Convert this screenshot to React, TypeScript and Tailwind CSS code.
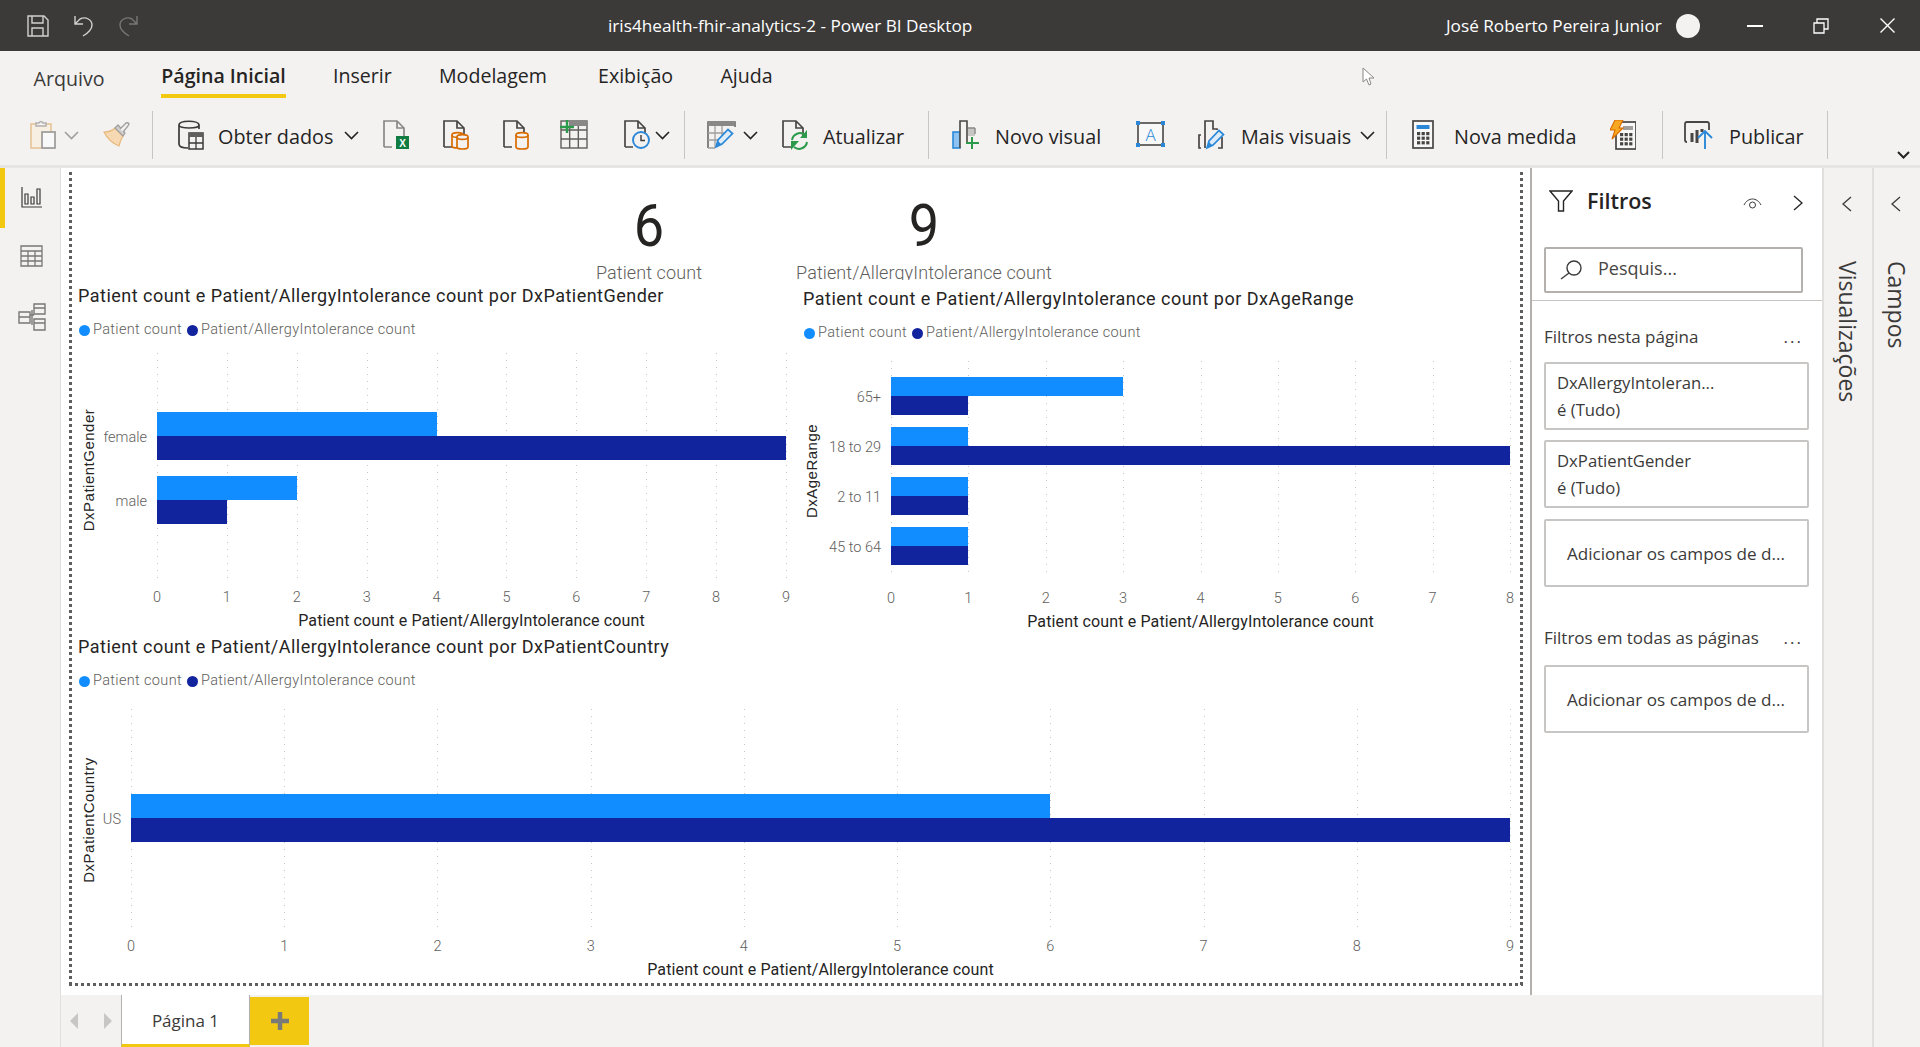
import type { ReactNode } from "react";

const UI = "font-['Open_Sans','Noto_Sans',sans-serif]";
const CHART = "font-['Roboto',sans-serif]";

type Category = { label: string; a: number; b: number };

function Chev({ className = "", color = "#252423" }: { className?: string; color?: string }) {
  return (
    <svg viewBox="0 0 15 9" className={`h-[9px] w-[15px] shrink-0 ${className}`} fill="none" stroke={color} strokeWidth="1.6">
      <path d="M1 1 L7.5 7.5 L14 1" />
    </svg>
  );
}

function Sep({ className = "" }: { className?: string }) {
  return <div className={`h-[48px] w-px shrink-0 bg-[#c8c6c4] ${className}`} />;
}

function Doc({ stroke = "#484644" }: { stroke?: string }) {
  return <path d="M1 27 V1 H14 L21 8 V16 M14 1 V8 H21 M1 27 H9" fill="#f3f2f1" stroke={stroke} strokeWidth="1.7" />;
}

function Cylinder({ x, y, w, h, color }: { x: number; y: number; w: number; h: number; color: string }) {
  return (
    <g fill="#f3f2f1" stroke={color} strokeWidth="1.7">
      <path d={`M${x} ${y + 2} V${y + h - 2} Q${x} ${y + h} ${x + w / 2} ${y + h} Q${x + w} ${y + h} ${x + w} ${y + h - 2} V${y + 2}`} />
      <ellipse cx={x + w / 2} cy={y + 2} rx={w / 2} ry="2.4" />
    </g>
  );
}

function Pencil({ x, y }: { x: number; y: number }) {
  return (
    <g transform={`translate(${x} ${y})`}>
      <path d="M1 19 L3 12 L13 1.5 L17.5 5.5 L7 16 Z" fill="#deecf9" stroke="#2b88d8" strokeWidth="1.7" />
      <path d="M1 19 L3 13 L6.5 16.5 Z" fill="#2b88d8" />
    </g>
  );
}

function TableGrid({ x, y, w, h, stroke = "#605e5c" }: { x: number; y: number; w: number; h: number; stroke?: string }) {
  return (
    <g fill="none" stroke={stroke} strokeWidth="1.4">
      <rect x={x} y={y} width={w} height={h} />
      <path d={`M${x} ${y + h / 3} H${x + w} M${x} ${y + (2 * h) / 3} H${x + w} M${x + w / 3} ${y} V${y + h} M${x + (2 * w) / 3} ${y} V${y + h}`} />
    </g>
  );
}

function PasteIcon() {
  return (
    <svg viewBox="0 0 27 30" className="h-[30px] w-[27px] shrink-0">
      <rect x="1" y="4" width="20" height="24" fill="#f8efe3" stroke="#e8c9a0" strokeWidth="1.8" />
      <path d="M6 6 V3 H9 Q11 0 13 3 H16 V6 Z" fill="#f3f2f1" stroke="#b3b0ad" strokeWidth="1.5" />
      <rect x="12" y="12" width="13" height="16" fill="#f8f8f8" stroke="#a19f9d" strokeWidth="1.8" />
    </svg>
  );
}

function BrushIcon() {
  return (
    <svg viewBox="0 0 27 26" className="h-[26px] w-[27px] shrink-0">
      <path d="M1 10 Q8 10 12 6 L20 14 Q17 19 16 24 Q6 20 1 10 Z" fill="#f6d9b3" stroke="#e8b77a" strokeWidth="1.2" />
      <path d="M12 6 L15 3 L22 11 L20 14 Z" fill="#d2d0ce" stroke="#a19f9d" strokeWidth="1.2" />
      <path d="M17 7 L23 1 Q25 0 26 2 Q26 3 20 10" fill="#f3f2f1" stroke="#a19f9d" strokeWidth="1.4" />
    </svg>
  );
}

function ObterIcon() {
  return (
    <svg viewBox="0 0 26 30" className="h-[30px] w-[26px] shrink-0">
      <path d="M1 5 V24 Q1 28 10 28 M21 5 V9 M1 5 C1 0 21 0 21 5 C21 9 1 9 1 5" fill="none" stroke="#3b3a39" strokeWidth="1.7" />
      <rect x="11" y="13" width="14" height="16" fill="#f3f2f1" stroke="#3b3a39" strokeWidth="1.5" />
      <rect x="11" y="13" width="14" height="4" fill="#605e5c" />
      <path d="M11 23 H25 M18 17 V29" stroke="#3b3a39" strokeWidth="1.3" />
    </svg>
  );
}

function ExcelDocIcon() {
  return (
    <svg viewBox="0 0 26 30" className="h-[30px] w-[26px] shrink-0">
      <Doc stroke="#8a8886" />
      <rect x="13" y="16" width="13" height="13" fill="#107c41" />
      <text x="19.5" y="26.5" fontSize="10" fontWeight="700" fill="#fff" textAnchor="middle" fontFamily="Liberation Sans">X</text>
    </svg>
  );
}

function DocDoubleDbIcon() {
  return (
    <svg viewBox="0 0 26 30" className="h-[30px] w-[26px] shrink-0">
      <Doc />
      <Cylinder x={9} y={13} w={11} h={15} color="#d86c00" />
      <Cylinder x={14} y={15} w={11} h={14} color="#d86c00" />
    </svg>
  );
}

function DocDbIcon() {
  return (
    <svg viewBox="0 0 26 30" className="h-[30px] w-[26px] shrink-0">
      <Doc />
      <Cylinder x={13} y={13} w={12} h={16} color="#d86c00" />
    </svg>
  );
}

function TablePlusIcon() {
  return (
    <svg viewBox="0 0 29 30" className="h-[30px] w-[29px] shrink-0">
      <TableGrid x={2} y={1} w={26} h={27} />
      <rect x="10" y="1" width="18" height="5" fill="#8a8886" />
      <path d="M8 0 V13 M1 7 H15" stroke="#2c9a4b" strokeWidth="2.4" />
    </svg>
  );
}

function ClockDocIcon() {
  return (
    <svg viewBox="0 0 26 30" className="h-[30px] w-[26px] shrink-0">
      <Doc />
      <circle cx="17" cy="20" r="8" fill="#f3f2f1" stroke="#2b88d8" strokeWidth="1.9" />
      <path d="M17 15 V20.5 H21" fill="none" stroke="#3b3a39" strokeWidth="1.4" />
    </svg>
  );
}

function TableEditIcon() {
  return (
    <svg viewBox="0 0 29 30" className="h-[30px] w-[29px] shrink-0">
      <path d="M1 28 V2 H28 V7" fill="none" stroke="#605e5c" strokeWidth="1.5" />
      <rect x="1" y="1" width="27" height="5" fill="#8a8886" />
      <path d="M1 13 H20 M1 20 H13 M8 6 V27 M15 6 V20 M1 28 H8" stroke="#a19f9d" strokeWidth="1.3" fill="none" />
      <Pencil x={8} y={8} />
    </svg>
  );
}

function RefreshDocIcon() {
  return (
    <svg viewBox="0 0 26 30" className="h-[30px] w-[26px] shrink-0">
      <Doc />
      <path d="M10 20 A8 8 0 0 1 23 15 M25 22 A8 8 0 0 1 12 27" fill="none" stroke="#2c9a4b" strokeWidth="2" />
      <path d="M25 10 V18 H18 Z M9 30 V21 H17 Z" fill="#2c9a4b" />
    </svg>
  );
}

function NovoVisualIcon() {
  return (
    <svg viewBox="0 0 27 30" className="h-[30px] w-[27px] shrink-0">
      <rect x="1" y="12" width="7" height="16" fill="#8cc3f3" stroke="#2b88d8" strokeWidth="1.6" />
      <path d="M8 28 V1 H15 V22" fill="#f3f2f1" stroke="#484644" strokeWidth="1.6" />
      <rect x="16" y="8" width="7" height="8" fill="#c8c6c4" />
      <path d="M23 8 V14 M16 8 H23" stroke="#8a8886" strokeWidth="1.4" />
      <path d="M20 17 V29 M14 23 H27" stroke="#2c9a4b" strokeWidth="2" />
    </svg>
  );
}

function TextBoxIcon() {
  return (
    <svg viewBox="0 0 29 30" className="h-[30px] w-[29px] shrink-0">
      <rect x="2" y="3" width="25" height="22" fill="#f8f8f8" stroke="#484644" strokeWidth="1.6" />
      <g fill="#2b88d8">
        <rect x="0" y="1" width="4" height="4" />
        <rect x="25" y="1" width="4" height="4" />
        <rect x="0" y="23" width="4" height="4" />
        <rect x="25" y="23" width="4" height="4" />
      </g>
      <text x="14.5" y="20.5" fontSize="17" fontWeight="300" fill="#2b88d8" textAnchor="middle" fontFamily="Open Sans">A</text>
    </svg>
  );
}

function MaisVisuaisIcon() {
  return (
    <svg viewBox="0 0 27 30" className="h-[30px] w-[27px] shrink-0">
      <path d="M3 15 H1 V28 H3 M7 28 V1 H15 V9 H19 V10 M24 17 V28 H20" fill="none" stroke="#484644" strokeWidth="1.7" />
      <Pencil x={8} y={9} />
    </svg>
  );
}

function CalcBody() {
  return (
    <g>
      <rect x="1" y="1" width="20" height="27" fill="#f8f8f8" stroke="#484644" strokeWidth="1.7" />
      <g fill="#484644">
        {[0, 1, 2].map((r) =>
          [0, 1, 2].map((c) => <rect key={`${r}${c}`} x={5 + c * 4.6} y={12 + r * 4.6} width="3.2" height="3.2" />),
        )}
      </g>
    </g>
  );
}

function CalcIcon() {
  return (
    <svg viewBox="0 0 22 30" className="h-[30px] w-[22px] shrink-0">
      <CalcBody />
      <rect x="4.5" y="5" width="13" height="4" fill="#2b88d8" />
    </svg>
  );
}

function QuickMeasureIcon() {
  return (
    <svg viewBox="0 0 26 30" className="h-[30px] w-[26px] shrink-0">
      <g transform="translate(5 1)">
        <CalcBody />
        <rect x="8" y="5" width="10" height="4" fill="#a19f9d" />
      </g>
      <path d="M5 0 H13 L9 8 H13 L2 19 L5 10 H0 Z" fill="#f7a823" stroke="#d86c00" strokeWidth="1.1" />
    </svg>
  );
}

function PublishIcon() {
  return (
    <svg viewBox="0 0 29 30" className="h-[30px] w-[29px] shrink-0">
      <path d="M3 22 Q1 22 1 20 V4 Q1 2 3 2 H23 Q25 2 25 4 V10" fill="none" stroke="#484644" strokeWidth="1.8" />
      <path d="M8 13 V22 M13 10 V23 M18 9 V12" stroke="#484644" strokeWidth="3" />
      <path d="M21 29 V11 M14 18 L21 11 L28 18" fill="none" stroke="#2b88d8" strokeWidth="1.9" />
    </svg>
  );
}

function RibbonText({ className, children }: { className: string; children: ReactNode }) {
  return <span className={`mt-[3px] shrink-0 whitespace-nowrap text-[19.8px] leading-none text-[#252423] ${className}`}>{children}</span>;
}

function TitleBar() {
  return (
    <div className={`flex h-[51px] shrink-0 items-center bg-[#3b3a39] text-[17.2px] text-white ${UI}`}>
      <svg viewBox="0 0 22 22" className="ml-[27px] h-[22px] w-[22px] shrink-0" fill="none" stroke="#d2d0ce" strokeWidth="1.4">
        <path d="M1 1 H17 L21 5 V21 H1 Z M5 1 V8 H16 V1 M5 21 V13 H16 V21" />
      </svg>
      <svg viewBox="0 0 19 22" className="ml-[25px] h-[22px] w-[19px] shrink-0" fill="none" stroke="#d2d0ce" strokeWidth="1.4">
        <path d="M1 1 V9 H9 M1 9 L6 4 C12 1 18 5 18 10 C18 14 14 18 9 21" />
      </svg>
      <svg viewBox="0 0 20 22" className="ml-[25px] h-[22px] w-[20px] shrink-0" fill="none" stroke="#797775" strokeWidth="1.4">
        <path d="M19 1 V9 H11 M19 9 L14 4 C8 1 2 5 2 10 C2 14 6 18 11 21" />
      </svg>
      <span className="ml-[470px] w-[364px] shrink-0 whitespace-nowrap text-center">iris4health-fhir-analytics-2 - Power BI Desktop</span>
      <span className="ml-[474px] w-[215px] shrink-0 whitespace-nowrap text-center">José Roberto Pereira Junior</span>
      <div className="ml-[15px] h-[24px] w-[24px] shrink-0 rounded-full bg-[#f3f2f1]" />
      <div className="ml-[47px] h-[2px] w-[16px] shrink-0 bg-white" />
      <svg viewBox="0 0 16 16" className="ml-[50px] h-[16px] w-[16px] shrink-0" fill="none" stroke="#fff" strokeWidth="1.3">
        <path d="M1 5 H11 V15 H1 Z M4 5 V1 H15 V11 H11" />
      </svg>
      <svg viewBox="0 0 15 15" className="ml-[51px] h-[15px] w-[15px] shrink-0" fill="none" stroke="#fff" strokeWidth="1.4">
        <path d="M0.5 0.5 L14.5 14.5 M14.5 0.5 L0.5 14.5" />
      </svg>
    </div>
  );
}

function MenuTabs() {
  return (
    <div className={`relative flex h-[54px] shrink-0 items-start pt-[12px] text-[19.6px] leading-[26px] text-[#252423] ${UI}`}>
      <span className="ml-[33px] mt-[3px] w-[72px] shrink-0 text-center text-[#3b3a39]">Arquivo</span>
      <span className="ml-[56px] w-[125px] shrink-0 whitespace-nowrap border-b-4 border-[#f2c811] pb-[5px] text-center font-semibold">Página Inicial</span>
      <span className="ml-[47px] w-[56px] shrink-0 text-center">Inserir</span>
      <span className="ml-[49px] w-[110px] shrink-0 text-center">Modelagem</span>
      <span className="ml-[50px] w-[74px] shrink-0 text-center">Exibição</span>
      <span className="ml-[48px] w-[53px] shrink-0 text-center">Ajuda</span>
      <svg viewBox="0 0 13 19" className="absolute left-[1362px] top-[16px] h-[19px] w-[13px]" fill="#fff" stroke="#8a8886" strokeWidth="1">
        <path d="M1 1 V15 L4.5 12 L7 18 L9 17 L7 11 H12 Z" />
      </svg>
    </div>
  );
}

function RibbonRow() {
  return (
    <div className={`flex h-[60px] shrink-0 items-center ${UI}`}>
      <div className="ml-[30px] shrink-0"><PasteIcon /></div>
      <Chev className="ml-[7px]" color="#a19f9d" />
      <div className="ml-[24px] shrink-0"><BrushIcon /></div>
      <Sep className="ml-[22px]" />
      <div className="ml-[25px] shrink-0"><ObterIcon /></div>
      <RibbonText className="ml-[14px] w-[116px]">Obter dados</RibbonText>
      <Chev className="ml-[10px]" />
      <div className="ml-[24px] shrink-0"><ExcelDocIcon /></div>
      <div className="ml-[34px] shrink-0"><DocDoubleDbIcon /></div>
      <div className="ml-[34px] shrink-0"><DocDbIcon /></div>
      <div className="ml-[30px] shrink-0"><TablePlusIcon /></div>
      <div className="ml-[36px] shrink-0"><ClockDocIcon /></div>
      <Chev className="ml-[5px]" />
      <Sep className="ml-[14px]" />
      <div className="ml-[22px] shrink-0"><TableEditIcon /></div>
      <Chev className="ml-[7px]" />
      <div className="ml-[24px] shrink-0"><RefreshDocIcon /></div>
      <RibbonText className="ml-[15px] w-[80px]">Atualizar</RibbonText>
      <Sep className="ml-[25px]" />
      <div className="ml-[23px] shrink-0"><NovoVisualIcon /></div>
      <RibbonText className="ml-[16px] w-[107px]">Novo visual</RibbonText>
      <div className="ml-[34px] shrink-0"><TextBoxIcon /></div>
      <div className="ml-[33px] shrink-0"><MaisVisuaisIcon /></div>
      <RibbonText className="ml-[16px] w-[109px]">Mais visuais</RibbonText>
      <Chev className="ml-[10px]" />
      <Sep className="ml-[11px]" />
      <div className="ml-[25px] shrink-0"><CalcIcon /></div>
      <RibbonText className="ml-[20px] w-[122px]">Nova medida</RibbonText>
      <div className="ml-[34px] shrink-0"><QuickMeasureIcon /></div>
      <Sep className="ml-[26px]" />
      <div className="ml-[21px] shrink-0"><PublishIcon /></div>
      <RibbonText className="ml-[16px] w-[73px]">Publicar</RibbonText>
      <Sep className="ml-[25px]" />
      <svg viewBox="0 0 13 8" className="ml-[69px] mt-[40px] h-[8px] w-[13px] shrink-0" fill="none" stroke="#252423" strokeWidth="2">
        <path d="M1 1 L6.5 6.5 L12 1" />
      </svg>
    </div>
  );
}

function LeftRail() {
  return (
    <div className="flex w-[61px] shrink-0 flex-col border-r border-[#e1dfdd] bg-[#f3f2f1]">
      <div className="flex h-[60px] items-center border-l-[5px] border-[#f2c811] pb-[2px] pl-[16px]">
        <svg viewBox="0 0 21 21" className="h-[21px] w-[21px]" fill="none" stroke="#3b3a39" strokeWidth="1.2">
          <path d="M1 0 V20 H21 M4 17 V7 H7 V17 Z M10 17 V10 H13 V17 Z M16 17 V2 H19 V17 Z" />
        </svg>
      </div>
      <svg viewBox="0 0 23 22" className="ml-[20px] mt-[17px] h-[22px] w-[23px]" fill="none" stroke="#797775" strokeWidth="1.3">
        <path d="M1 1 H22 V21 H1 Z M1 6 H22 M1 11 H22 M1 16 H22 M8 6 V21 M15 6 V21" />
      </svg>
      <svg viewBox="0 0 28 28" className="ml-[18px] mt-[36px] h-[28px] w-[28px]" fill="none" stroke="#797775" strokeWidth="1.4">
        <path d="M1 9 H12 V20 H1 Z M1 14 H12 M16 1 H27 V11 H16 Z M16 5 H27 M16 16 H27 V27 H16 Z M16 20 H27 M12 12 H16 M14 7 V22" />
      </svg>
    </div>
  );
}

function Kpi({ value, label, className }: { value: string; label: string; className: string }) {
  return (
    <div className={`flex shrink-0 flex-col items-center pt-[28px] ${CHART} ${className}`}>
      <div className="mb-[8px] scale-x-90 text-[60px] font-[450] leading-[60px] text-[#252423]">{value}</div>
      <div className="h-[16px] overflow-hidden whitespace-nowrap text-[18px] font-light leading-[18px] tracking-[0.1px] text-[#605e5c]">{label}</div>
    </div>
  );
}

function Legend() {
  return (
    <div className="flex h-[40px] items-center text-[14.5px] font-light tracking-[0.35px] text-[#605e5c]">
      <span className="ml-px mr-[3px] h-[11px] w-[11px] rounded-full bg-[#118dff]" />
      <span className="w-[94px] whitespace-nowrap">Patient count</span>
      <span className="mr-[3px] h-[11px] w-[11px] rounded-full bg-[#12239e]" />
      <span className="whitespace-nowrap">Patient/AllergyIntolerance count</span>
    </div>
  );
}

type ChartProps = {
  title: string;
  yTitle: string;
  categories: Category[];
  max: number;
  boxClass: string;
  headClass: string;
  plotClass: string;
  axisClass: string;
  bandsClass: string;
  barClass: string;
  tickClass: string;
  yTitleClass: string;
};

// one clustered bar visual, the plot numbers come from the picture
function BarChart({ title, yTitle, categories, max, boxClass, headClass, plotClass, axisClass, bandsClass, barClass, tickClass, yTitleClass }: ChartProps) {
  const ticks = Array.from({ length: max + 1 }, (_, i) => i);
  return (
    <div className={`shrink-0 ${CHART} ${boxClass}`}>
      <div className={headClass}>
        <div className="flex h-[30px] items-center whitespace-nowrap text-[18px] tracking-[0.48px] text-[#252423]">{title}</div>
        <Legend />
      </div>
      <div className={`relative ${plotClass}`}>
        {ticks.map((t) => (
          <div
            key={t}
            className="absolute bottom-0 top-0 w-px bg-[repeating-linear-gradient(180deg,#c8c6c4_0,#c8c6c4_1px,transparent_1px,transparent_7px)]"
            style={{ left: `${(t / max) * 100}%` }}
          />
        ))}
        <div className={`relative flex h-full flex-col justify-center ${bandsClass}`}>
          {categories.map((c) => (
            <div key={c.label} className="relative">
              <div className="absolute right-full top-1/2 mr-[10px] mt-[2px] -translate-y-1/2 whitespace-nowrap text-[14.5px] font-light text-[#605e5c]">{c.label}</div>
              <div className={`bg-[#118dff] ${barClass}`} style={{ width: `${(c.a / max) * 100}%` }} />
              <div className={`bg-[#12239e] ${barClass}`} style={{ width: `${(c.b / max) * 100}%` }} />
            </div>
          ))}
        </div>
        <div className={`absolute top-1/2 -translate-y-1/2 rotate-180 whitespace-nowrap font-['Liberation_Sans'] text-[15px] tracking-[0.5px] text-[#252423] [writing-mode:vertical-rl] ${yTitleClass}`}>{yTitle}</div>
      </div>
      <div className={axisClass}>
        <div className={`relative h-[20px] ${tickClass}`}>
          {ticks.map((t) => (
            <span
              key={t}
              className="absolute top-0 -translate-x-1/2 text-[14.5px] font-light leading-[20px] text-[#605e5c]"
              style={{ left: `${(t / max) * 100}%` }}
            >
              {t}
            </span>
          ))}
        </div>
        <div className="flex h-[25px] items-center justify-center whitespace-nowrap text-[16px] tracking-[0.13px] text-[#252423]">Patient count e Patient/AllergyIntolerance count</div>
      </div>
    </div>
  );
}

function Canvas() {
  return (
    <div className="relative h-full w-[1469px] shrink-0 overflow-hidden bg-white">
      <div className="flex h-[112px]">
        <Kpi value="6" label="Patient count" className="ml-[488px] w-[200px]" />
        <Kpi value="9" label="Patient/AllergyIntolerance count" className="ml-[25px] w-[300px]" />
      </div>
      <div className="flex h-[351px] pl-[10px]">
        <BarChart
          title="Patient count e Patient/AllergyIntolerance count por DxPatientGender"
          yTitle="DxPatientGender"
          categories={[
            { label: "female", a: 4, b: 9 },
            { label: "male", a: 2, b: 1 },
          ]}
          max={9}
          boxClass="w-[724px]"
          headClass="pl-[7px]"
          plotClass="ml-[86px] w-[629px] mt-[3px] h-[229px]"
          axisClass="ml-[86px] w-[629px]"
          bandsClass="gap-[16px]"
          barClass="h-[24px]"
          tickClass="mt-[6px]"
          yTitleClass="left-[-79px] mt-[2px]"
        />
        <BarChart
          title="Patient count e Patient/AllergyIntolerance count por DxAgeRange"
          yTitle="DxAgeRange"
          categories={[
            { label: "65+", a: 3, b: 1 },
            { label: "18 to 29", a: 1, b: 8 },
            { label: "2 to 11", a: 1, b: 1 },
            { label: "45 to 64", a: 1, b: 1 },
          ]}
          max={8}
          boxClass="mt-[3px] w-[725px]"
          headClass="pl-[8px]"
          plotClass="ml-[96px] w-[619px] mt-[8px] h-[217px]"
          axisClass="ml-[96px] w-[619px]"
          bandsClass="gap-[12px] pt-[2px]"
          barClass="h-[19px]"
          tickClass="mt-[11px]"
          yTitleClass="left-[-90px] mt-[1px]"
        />
      </div>
      <div className="pl-[10px]">
        <BarChart
          title="Patient count e Patient/AllergyIntolerance count por DxPatientCountry"
          yTitle="DxPatientCountry"
          categories={[{ label: "US", a: 6, b: 9 }]}
          max={9}
          boxClass="w-[1449px]"
          headClass="pl-[7px]"
          plotClass="ml-[60px] w-[1379px] mt-[8px] h-[224px]"
          axisClass="ml-[60px] w-[1379px]"
          bandsClass="pb-[6px]"
          barClass="h-[24px]"
          tickClass="mt-[4px]"
          yTitleClass="left-[-53px] -mt-[1px]"
        />
      </div>
      <div className="absolute bottom-[9px] left-[8px] top-[4px] w-[3px] bg-[repeating-linear-gradient(180deg,#605e5c_0,#605e5c_3px,transparent_3px,transparent_6px)]" />
      <div className="absolute bottom-[9px] left-[1459px] top-[4px] w-[3px] bg-[repeating-linear-gradient(180deg,#605e5c_0,#605e5c_3px,transparent_3px,transparent_6px)]" />
      <div className="absolute bottom-[9px] left-[8px] h-[3px] w-[1454px] bg-[repeating-linear-gradient(90deg,#605e5c_0,#605e5c_3px,transparent_3px,transparent_6px)]" />
    </div>
  );
}

function FilterCard({ className = "", children }: { className?: string; children: ReactNode }) {
  return (
    <div className={`flex h-[68px] w-[265px] flex-col justify-center rounded-[2px] border-2 border-[#c8c6c4] text-[16.7px] leading-[27px] text-[#3b3a39] ${className}`}>
      {children}
    </div>
  );
}

function FilterSectionHead({ className, label }: { className: string; label: string }) {
  return (
    <div className={`flex h-[24px] w-[259px] items-center justify-between text-[17px] text-[#3b3a39] ${className}`}>
      <span className="whitespace-nowrap">{label}</span>
      <span className="tracking-[2px]">...</span>
    </div>
  );
}

function FilterPane() {
  return (
    <div className={`flex h-full w-[292px] shrink-0 flex-col border-l-2 border-[#b3b0ad] bg-white ${UI}`}>
      <div className="h-[133px] shrink-0 border-b border-[#c8c6c4] pl-[12px]">
        <div className="flex h-[66px] items-center">
          <svg viewBox="0 0 24 22" className="ml-[5px] h-[22px] w-[24px]" fill="none" stroke="#252423" strokeWidth="1.4">
            <path d="M1 1 H23 L14.5 11 V21 H9.5 V11 Z" />
          </svg>
          <span className="ml-[14px] w-[65px] whitespace-nowrap text-[21.5px] font-semibold text-[#252423]">Filtros</span>
          <svg viewBox="0 0 19 12" className="ml-[91px] mt-[3px] h-[12px] w-[19px]" fill="none" stroke="#3b3a39" strokeWidth="1">
            <path d="M1 8 C5 0 14 0 18 8" />
            <circle cx="9.5" cy="8" r="3" />
          </svg>
          <svg viewBox="0 0 10 16" className="ml-[31px] mt-[3px] h-[16px] w-[10px]" fill="none" stroke="#252423" strokeWidth="1.3">
            <path d="M1 1 L9 8 L1 15" />
          </svg>
        </div>
        <div className="mt-[13px] flex h-[46px] w-[259px] items-center rounded-[2px] border-2 border-[#b3b0ad]">
          <svg viewBox="0 0 23 20" className="ml-[14px] h-[20px] w-[23px]" fill="none" stroke="#3b3a39" strokeWidth="1.4">
            <circle cx="14" cy="8" r="7" />
            <path d="M9 13 L1 19" />
          </svg>
          <span className="ml-[15px] pb-[3px] text-[18px] text-[#484644]">Pesquis...</span>
        </div>
      </div>
      <div className="pl-[12px]">
        <FilterSectionHead className="mt-[24px]" label="Filtros nesta página" />
        <FilterCard className="mt-[13px] pl-[11px]">
          <span>DxAllergyIntoleran...</span>
          <span>é (Tudo)</span>
        </FilterCard>
        <FilterCard className="mt-[10px] pl-[11px]">
          <span>DxPatientGender</span>
          <span>é (Tudo)</span>
        </FilterCard>
        <FilterCard className="mt-[11px] pl-[21px] text-[17.1px]">
          <span className="whitespace-nowrap">Adicionar os campos de d...</span>
        </FilterCard>
        <FilterSectionHead className="mt-[39px]" label="Filtros em todas as páginas" />
        <FilterCard className="mt-[15px] pl-[21px] text-[17.1px]">
          <span className="whitespace-nowrap">Adicionar os campos de d...</span>
        </FilterCard>
      </div>
    </div>
  );
}

function SidePane({ label, className }: { label: string; className: string }) {
  return (
    <div className={`flex shrink-0 flex-col items-center border-l-2 border-[#e1dfdd] bg-[#f3f2f1] pr-[2px] ${UI} ${className}`}>
      <svg viewBox="0 0 10 16" className="mt-[28px] h-[16px] w-[10px]" fill="none" stroke="#3b3a39" strokeWidth="1.3">
        <path d="M9 1 L1 8 L9 15" />
      </svg>
      <div className="mt-[49px] whitespace-nowrap text-[23px] leading-none text-[#3b3a39] [writing-mode:vertical-rl]">{label}</div>
    </div>
  );
}

function PageBar() {
  return (
    <div className={`flex h-[52px] shrink-0 bg-[#f3f2f1] ${UI}`}>
      <svg viewBox="0 0 8 16" className="ml-[9px] mt-[18px] h-[16px] w-[8px]" fill="#c8c6c4">
        <path d="M8 0 V16 L0 8 Z" />
      </svg>
      <svg viewBox="0 0 8 16" className="ml-[26px] mt-[18px] h-[16px] w-[8px]" fill="#c8c6c4">
        <path d="M0 0 V16 L8 8 Z" />
      </svg>
      <div className="ml-[9px] flex h-full w-[129px] items-center justify-center border-x border-b-[3px] border-[#b3b0ad] border-b-[#f2c811] bg-white pt-[2px] text-[17px] text-[#3b3a39]">Página 1</div>
      <div className="mt-[2px] flex h-[48px] w-[59px] items-center justify-center bg-[#f2c811]">
        <svg viewBox="0 0 18 18" className="h-[18px] w-[18px]" fill="none" stroke="#7a7a78" strokeWidth="4.5">
          <path d="M9 0 V18 M0 9 H18" />
        </svg>
      </div>
    </div>
  );
}

export default function App() {
  return (
    <div className="flex h-[1047px] w-[1920px] flex-col overflow-hidden bg-[#f3f2f1]">
      <TitleBar />
      <div className="shrink-0 border-b-[3px] border-[#e6e5e4]">
        <MenuTabs />
        <RibbonRow />
      </div>
      <div className="flex min-h-0 flex-1">
        <LeftRail />
        <div className="flex w-[1761px] shrink-0 flex-col">
          <div className="flex h-[827px] shrink-0">
            <Canvas />
            <FilterPane />
          </div>
          <PageBar />
        </div>
        <SidePane label="Visualizações" className="w-[50px]" />
        <SidePane label="Campos" className="w-[48px]" />
      </div>
    </div>
  );
}
